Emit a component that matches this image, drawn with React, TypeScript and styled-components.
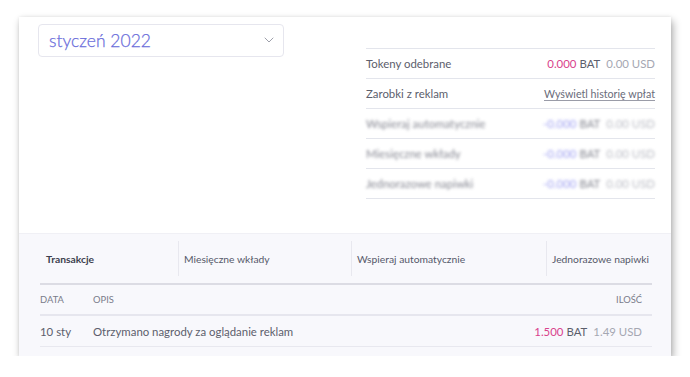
import React from 'react';
import styled, { createGlobalStyle, css } from 'styled-components';

const GlobalStyle = createGlobalStyle`
  html, body { margin: 0; padding: 0; background: #ffffff; }
  body { font-family: Lato, "Open Sans", sans-serif; color: #5f6170; }
`;

// ── Layout ────────────────────────────────────────────────────
const Page = styled.div`
  padding: 17px 0 0 19px;
`;

const Card = styled.section`
  width: 652px;
  height: 339px;
  background: #fff;
  box-shadow: 2px 4px 8px rgba(0,0,0,0.32), 0 0 3px rgba(0,0,0,0.08);
  display: flex;
  flex-direction: column;
  overflow: hidden;
`;

const Top = styled.div`
  display: flex;
  justify-content: space-between;
  padding: 7px 16px 0 19px;
  height: 216px;
  flex-shrink: 0;
  box-sizing: border-box;
`;

const Select = styled.div`
  width: 246px;
  height: 33px;
  box-sizing: border-box;
  border: 1px solid #e6e6ee;
  border-radius: 4px;
  display: flex;
  align-items: center;
  justify-content: space-between;
  padding: 0 9px 1px 10px;
  color: #6a6ddb;
  font-size: 17.5px;
  font-weight: 300;
  -webkit-text-stroke: 0.25px #6a6ddb;
`;

const Summary = styled.div`
  width: 289px;
  margin-top: 24px;
  border-top: 1px solid #e3e5ec;
`;

const Row = styled.div<{ $blur?: boolean }>`
  height: 30px;
  box-sizing: border-box;
  border-bottom: 1px solid #e3e5ec;
  display: flex;
  align-items: center;
  justify-content: space-between;
  font-size: 11.4px;
  ${({ $blur }) => $blur && css`
    & > * { filter: blur(1.6px); opacity: 0.75; }
  `}
`;

const Label = styled.span`
  color: #5c5e6c;
`;

const Amount = styled.span`
  display: flex;
  gap: 6px;
  align-items: baseline;
`;

const Tok = styled.span<{ $tone: 'pink' | 'blue' }>`
  color: ${({ $tone }) => ($tone === 'pink' ? '#d9428c' : '#7f80ec')};
`;

const Bat = styled.span`
  color: #5c5e6c;
  margin-left: -3px;
`;

const Usd = styled.span`
  color: #a5a7b2;
`;

const Link = styled.a`
  color: #6a6c7a;
  text-decoration: underline;
  text-decoration-color: #9a9ca8;
  text-underline-offset: 2px;
  font-size: 10.7px;
`;

const Bottom = styled.div`
  flex: 1;
  background: #f8f8fc;
  padding: 0 19px;
  border-top: 1px solid #f0f0f5;
`;

const Tabs = styled.nav`
  display: grid;
  grid-template-columns: 140px 173px 195px 1fr;
  height: 49px;
  align-items: center;
`;

const Tab = styled.div<{ $active?: boolean; $first?: boolean }>`
  height: 35px;
  display: flex;
  align-items: center;
  white-space: nowrap;
  padding-left: ${({ $first }) => ($first ? '8px' : '5px')};
  border-left: ${({ $first }) => ($first ? 'none' : '1px solid #e8e8ef')};
  font-size: 10.3px;
  color: ${({ $active }) => ($active ? '#3d3f4f' : '#56586a')};
  font-weight: ${({ $active }) => ($active ? 700 : 400)};
`;

const Table = styled.div`
  margin-left: 2px;
  width: 612px;
  border-top: 2px solid #dcdce4;
`;

const TRow = styled.div<{ $head?: boolean }>`
  height: 31px;
  box-sizing: border-box;
  display: grid;
  grid-template-columns: 53px 1fr auto;
  align-items: center;
  padding-right: 10px;
  border-bottom: ${({ $head }) => ($head ? '2px solid #e6e6ee' : '1px solid #e8e8ef')};
  font-size: ${({ $head }) => ($head ? '9.4px' : '11.4px')};
  color: ${({ $head }) => ($head ? '#7a7c8a' : '#5c5e6c')};
  ${({ $head }) => $head && css`text-transform: uppercase;`}
`;

const Chevron = () => (
  <svg width="10" height="6" viewBox="0 0 10 6" fill="none">
    <path d="M1 1l4 4 4-4" stroke="#9ea0ab" strokeWidth="1" strokeLinecap="round" strokeLinejoin="round" />
  </svg>
);

const blurred = ['Wspieraj automatycznie', 'Miesięczne wkłady', 'Jednorazowe napiwki'];

export default function App() {
  return (
    <Page>
      <GlobalStyle />
      <Card>
        <Top>
          <Select>
            <span>styczeń 2022</span>
            <Chevron />
          </Select>
          <Summary>
            <Row>
              <Label>Tokeny odebrane</Label>
              <Amount>
                <Tok $tone="pink">0.000</Tok><Bat>BAT</Bat><Usd>0.00 USD</Usd>
              </Amount>
            </Row>
            <Row>
              <Label>Zarobki z reklam</Label>
              <Link>Wyświetl historię wpłat</Link>
            </Row>
            {blurred.map((l) => (
              <Row $blur key={l}>
                <Label>{l}</Label>
                <Amount>
                  <Tok $tone="blue">-0.000</Tok><Bat>BAT</Bat><Usd>0.00 USD</Usd>
                </Amount>
              </Row>
            ))}
          </Summary>
        </Top>
        <Bottom>
          <Tabs>
            <Tab $first $active>Transakcje</Tab>
            <Tab>Miesięczne wkłady</Tab>
            <Tab>Wspieraj automatycznie</Tab>
            <Tab>Jednorazowe napiwki</Tab>
          </Tabs>
          <Table>
            <TRow $head>
              <span>Data</span>
              <span>Opis</span>
              <span>Ilość</span>
            </TRow>
            <TRow>
              <span>10 sty</span>
              <span>Otrzymano nagrody za oglądanie reklam</span>
              <Amount>
                <Tok $tone="pink">1.500</Tok><Bat>BAT</Bat><Usd>1.49 USD</Usd>
              </Amount>
            </TRow>
          </Table>
        </Bottom>
      </Card>
    </Page>
  );
}
